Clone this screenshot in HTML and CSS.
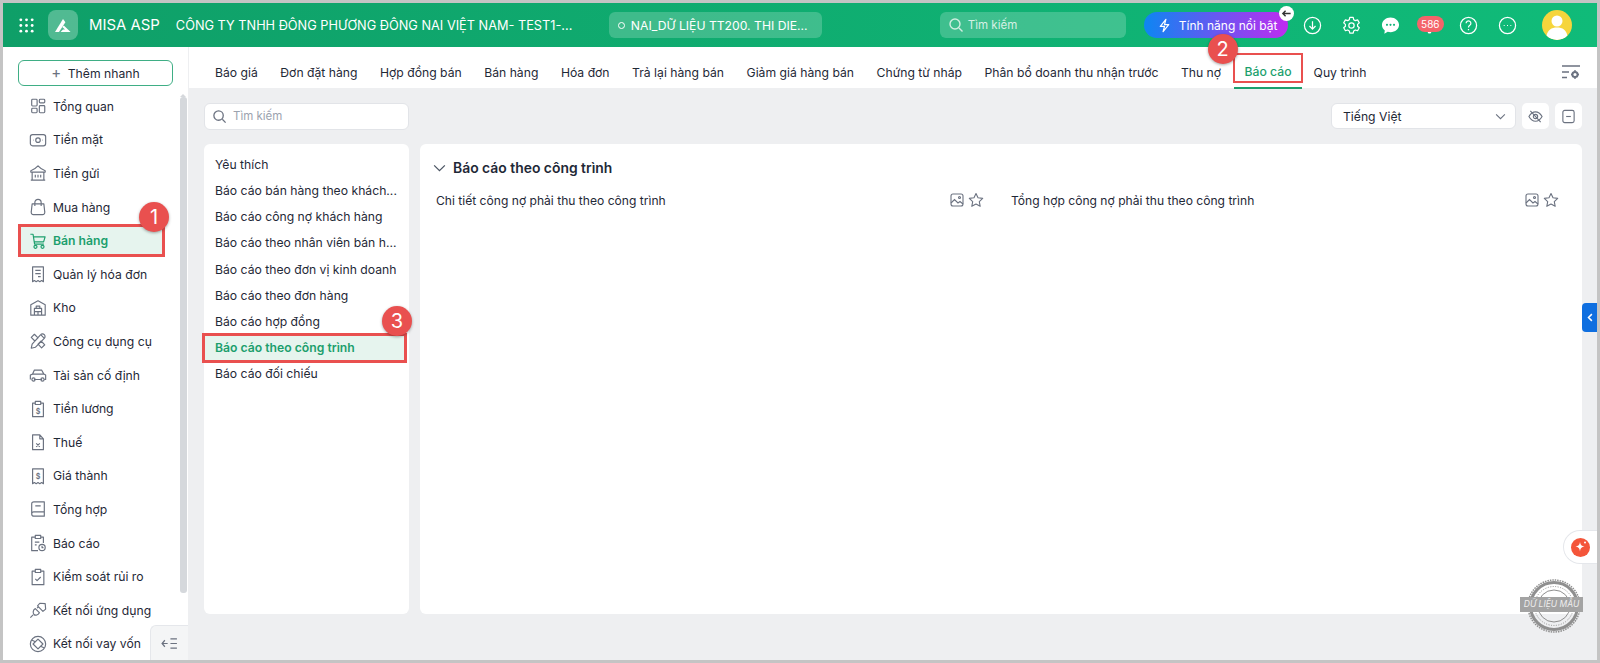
FILE: index.html
```html
<!DOCTYPE html>
<html lang="vi">
<head>
    <meta charset="UTF-8">
    <title>MISA ASP - Báo cáo</title>
    <link rel="stylesheet" href="styles.css">
</head>
<body>
    <header class="topbar">
        <svg class="apps" viewBox="0 0 18 18" fill="#fff"><circle cx="3" cy="3" r="1.5"/><circle cx="9" cy="3" r="1.5"/><circle cx="15" cy="3" r="1.5"/><circle cx="3" cy="9" r="1.5"/><circle cx="9" cy="9" r="1.5"/><circle cx="15" cy="9" r="1.5"/><circle cx="3" cy="15" r="1.5"/><circle cx="9" cy="15" r="1.5"/><circle cx="15" cy="15" r="1.5"/></svg>
        <div class="logo">
            <svg viewBox="0 0 20 18" width="16" height="15" fill="#fff"><path d="M10 1 L13 5 L5 17 H0 Z"/><path d="M11 9 L19.5 17 H7 L10 14 H12.5 L9 11 Z"/></svg>
        </div>
        <div class="brand">MISA ASP</div>
        <div class="company">CÔNG TY TNHH ĐÔNG PHƯƠNG ĐÔNG NAI VIỆT NAM- TEST1-...</div>
        <div class="env"><span class="env-dot"></span>NAI_DỮ LIỆU TT200. THI DIE...</div>
        <div class="top-search">
            <svg viewBox="0 0 16 16" width="16" height="16" fill="none" stroke="#cfeee0" stroke-width="1.4"><circle cx="7" cy="7" r="5"/><path d="M11 11l3.5 3.5"/></svg>
            Tìm kiếm
        </div>
        <div class="feature">
            <svg viewBox="0 0 16 16" width="15" height="15" fill="none" stroke="#fff" stroke-width="1.3" stroke-linejoin="round"><path d="M9.5 1.5 3.5 9H8l-1.5 5.5L12.5 7H8z"/></svg>
            Tính năng nổi bật
            <span class="feature-back">
                <svg viewBox="0 0 12 12" width="11" height="11" fill="none" stroke="#333" stroke-width="1.5"><path d="M10.5 6H2M5 3 2 6l3 3"/></svg>
            </span>
        </div>
        <div class="top-icons">
            <svg viewBox="0 0 20 20" fill="none" stroke="#fff" stroke-width="1.3"><circle cx="10" cy="10" r="8.5"/><path d="M10 5.5v8M6.8 10.5 10 13.8l3.2-3.3"/></svg>
            <svg viewBox="0 0 20 20" fill="none" stroke="#fff" stroke-width="1.3" stroke-linejoin="round"><path d="M8.2 1.5h3.6l.5 2.4 1.7 1 2.4-.8 1.8 3.1-1.8 1.6v2l1.8 1.6-1.8 3.1-2.4-.8-1.7 1-.5 2.4H8.2l-.5-2.4-1.7-1-2.4.8-1.8-3.1 1.8-1.6v-2L1.8 7.2l1.8-3.1 2.4.8 1.7-1z"/><circle cx="10" cy="10" r="2.8"/></svg>
            <svg viewBox="0 0 20 20" fill="#fff"><path d="M10 1.5c5 0 9 3.4 9 7.8s-4 7.8-9 7.8c-1 0-2-.1-2.9-.4L3.5 18.8l.5-3.6C2.1 13.8 1 11.7 1 9.3 1 4.9 5 1.5 10 1.5z"/><circle cx="6.3" cy="9.3" r="1.1" fill="#10b478"/><circle cx="10" cy="9.3" r="1.1" fill="#10b478"/><circle cx="13.7" cy="9.3" r="1.1" fill="#10b478"/></svg>
            <span class="bell">
                <svg viewBox="0 0 20 20" fill="#fff"><path d="M10 2a5.5 5.5 0 0 0-5.5 5.5V12L3 15h14l-1.5-3V7.5A5.5 5.5 0 0 0 10 2z"/><path d="M8 16.5a2 2 0 0 0 4 0z"/></svg>
                <span class="bell-count">586</span>
            </span>
            <svg viewBox="0 0 20 20" fill="none" stroke="#fff" stroke-width="1.3"><circle cx="10" cy="10" r="8.5"/><path d="M7.5 7.7a2.5 2.5 0 1 1 3.8 2.1c-.9.6-1.3 1-1.3 2.2M10 13.6v1.5"/></svg>
            <svg viewBox="0 0 20 20" fill="none" stroke="#fff" stroke-width="1.3"><circle cx="10" cy="10" r="8.5"/><path d="M6 10h1M9.5 10h1M13 10h1"/></svg>
        </div>
        <div class="avatar">
            <svg viewBox="0 0 30 30" width="30" height="30" fill="#fff"><circle cx="15" cy="11" r="5.5"/><path d="M4.5 26c1-6 5-8.5 10.500-8.500s9.500 2.500 10.500 8.500A15 15 0 0 1 15 30a15 15 0 0 1-10.500-4z"/></svg>
        </div>
    </header>

    <div class="main">
        <aside class="sidebar">
            <button class="quick-add"><span class="plus">+</span> Thêm nhanh</button>
            <nav>
                <a class="nav-item"><svg viewBox="0 0 20 20"><rect x="3" y="2.5" width="6" height="7.5" rx="1"/><rect x="11.5" y="2.5" width="6" height="4" rx="1"/><rect x="3" y="12.5" width="6" height="5" rx="1"/><rect x="11.5" y="9.5" width="6" height="8" rx="1"/></svg>Tổng quan</a>
                <a class="nav-item"><svg viewBox="0 0 20 20"><rect x="1.5" y="4" width="17" height="12.5" rx="2.5"/><circle cx="10" cy="10.2" r="2.5"/><path d="M4.5 10.2h.5M15 10.2h.5"/></svg>Tiền mặt</a>
                <a class="nav-item"><svg viewBox="0 0 20 20"><path d="M2 7.5c3-1 5.500-2.800 8-5.500 2.500 2.700 5 4.500 8 5.500v1.500H2zM3.500 9v9h13V9M2 18h16M7 12v3M10 12v3M13 12v3"/></svg>Tiền gửi</a>
                <a class="nav-item"><svg viewBox="0 0 20 20"><path d="M3.5 6.5h13l1 9a2.500 2.500 0 0 1-2.500 3H5a2.500 2.500 0 0 1-2.500-3zM6.500 9V5a3.500 3.500 0 0 1 7 0v4"/></svg>Mua hàng</a>
                <a class="nav-item active"><svg viewBox="0 0 20 20"><path d="M1.5 2.5H4.500l1.700 11h10.300M4.900 5.500h13l-1.700 5.500H5.700"/><circle cx="7.2" cy="16.5" r="1.7"/><circle cx="15" cy="16.5" r="1.7"/></svg>Bán hàng<span class="step step-1">1</span></a>
                <a class="nav-item"><svg viewBox="0 0 20 20"><path d="M4 2h12v16.500l-2-1.200-2 1.200-2-1.200-2 1.200-2-1.200-2 1.200zM7 6h6M7 9.500h6M10 13h3"/></svg>Quản lý hóa đơn</a>
                <a class="nav-item"><svg viewBox="0 0 20 20"><path d="M2 18V6.500L10 2l8 4.500V18zM6 18V10.500h8V18M8 10.500V8h4v2.500M6 14h8M10 14v4"/></svg>Kho</a>
                <a class="nav-item"><svg viewBox="0 0 20 20"><path d="M2.500 6 6 2.500l4 4L6.500 10zM13 3 17 7 7 17l-4.500 1L3.500 13.500zM10 13.500l3.500-3.500 4 4.200-3.500 3.500zM13 3c1-1.200 3-1 4 0s1.200 3 0 4"/></svg>Công cụ dụng cụ</a>
                <a class="nav-item"><svg viewBox="0 0 20 20"><path d="M1.500 15v-5l2.500-1 2-4.500h8L16.500 9l2 1v5h-1.500M5.500 15h9M4 9h12.500"/><circle cx="5" cy="15" r="1.8"/><circle cx="15" cy="15" r="1.8"/></svg>Tài sản cố định</a>
                <a class="nav-item"><svg viewBox="0 0 20 20"><path d="M7 3.500H4v15h12v-15h-3M7 1.500h6v3.500H7z"/><text x="10" y="15" text-anchor="middle" class="ico-text">$</text></svg>Tiền lương</a>
                <a class="nav-item"><svg viewBox="0 0 20 20"><path d="M4 2h8l4 4.500V18.500H4zM12 2v4.500h4M8 11.500l4 4M12 11.500l-4 4"/></svg>Thuế</a>
                <a class="nav-item"><svg viewBox="0 0 20 20"><path d="M4 2h12v16.500l-2-1.200-2 1.200-2-1.200-2 1.200-2-1.200-2 1.200z"/><text x="10" y="13" text-anchor="middle" class="ico-text">$</text></svg>Giá thành</a>
                <a class="nav-item"><svg viewBox="0 0 20 20"><path d="M5.500 2h11.500v16H5.500A2.500 2.500 0 0 1 3 15.500v-11A2.500 2.500 0 0 1 5.500 2zM3 15a2.300 2.300 0 0 1 2.300-1.800H17M7 6.500h6"/></svg>Tổng hợp</a>
                <a class="nav-item"><svg viewBox="0 0 20 20"><path d="M7 3.500H3V18.500H10M13 3.500h3V10M7 1.500h6v3.500H7zM6.500 9h5M6.500 12h2"/><circle cx="14.5" cy="15" r="3.5"/><path d="M14.500 13v2.200h1.600"/></svg>Báo cáo</a>
                <a class="nav-item"><svg viewBox="0 0 20 20"><path d="M7 3.500H3.500v15h13v-15H13M7 1.500h6v3.500H7zM7 12l2 2 4-4"/></svg>Kiểm soát rủi ro</a>
                <a class="nav-item"><svg viewBox="0 0 20 20"><path d="m1.500 18.500 3-3M7 8.500l4.500 4.500c-1 2.500-4.500 3.500-6 2S4.500 9.500 7 8.500zM12 2.500l6 .5.500 6-3 2.500-6-6zM9 8l1.500-1.500"/></svg>Kết nối ứng dụng</a>
                <a class="nav-item"><svg viewBox="0 0 20 20"><circle cx="10" cy="10" r="8.5"/><path d="M10 4.500l5.500 5.500-5.500 5.500L4.500 10zM3 5.500l4 2M17 14.500l-4-2"/></svg>Kết nối vay vốn</a>
            </nav>
            <span class="scroll-arrow"></span>
            <span class="scroll-thumb"></span>
            <div class="collapse">
                <svg viewBox="0 0 18 14" width="17" height="13" fill="none" stroke="#6b7280" stroke-width="1.3"><path d="M7 7H1M4 3.500 1 7l3 3.500M10 2h7M10 7h7M10 12h7"/></svg>
            </div>
        </aside>

        <div class="content">
            <div class="tabs">
                <a class="tab">Báo giá</a>
                <a class="tab">Đơn đặt hàng</a>
                <a class="tab">Hợp đồng bán</a>
                <a class="tab">Bán hàng</a>
                <a class="tab">Hóa đơn</a>
                <a class="tab">Trả lại hàng bán</a>
                <a class="tab">Giảm giá hàng bán</a>
                <a class="tab">Chứng từ nháp</a>
                <a class="tab">Phân bổ doanh thu nhận trước</a>
                <a class="tab">Thu nợ</a>
                <a class="tab active">Báo cáo<span class="step step-2">2</span></a>
                <a class="tab">Quy trình</a>
                <svg class="tab-settings" viewBox="0 0 19 15" width="19" height="15" fill="none" stroke="#6b7280" stroke-width="1.4"><path d="M0 1h18M0 7h7M0 12.500h5"/><circle cx="13" cy="9.500" r="2.600" stroke-width="2"/><path d="M13 5v1.500M13 12.500V14M9 9.500h1.500M15.500 9.500H17"/></svg>
            </div>

            <div class="toolbar">
                <div class="search">
                    <svg viewBox="0 0 16 16" width="15" height="15" fill="none" stroke="#6b7280" stroke-width="1.4"><circle cx="7" cy="7" r="5"/><path d="M11 11l3.500 3.500"/></svg>
                    Tìm kiếm
                </div>
                <div class="lang">Tiếng Việt
                    <svg viewBox="0 0 12 8" width="11" height="7" fill="none" stroke="#6b7280" stroke-width="1.2"><path d="M1 1.500 6 6.500l5-5"/></svg>
                </div>
                <button class="tool-btn"><svg viewBox="0 0 16 16" width="15" height="15" fill="none" stroke="#6b7280" stroke-width="1.2"><path d="M1 8c2-3.500 4.300-5 7-5s5 1.500 7 5c-2 3.500-4.300 5-7 5s-5-1.500-7-5z"/><circle cx="8" cy="8" r="2.3"/><path d="M2.500 2 13.500 14"/></svg></button>
                <button class="tool-btn"><svg viewBox="0 0 16 16" width="15" height="15" fill="none" stroke="#6b7280" stroke-width="1.2"><rect x="2" y="1.5" width="12" height="13" rx="2"/><path d="M5.500 8h5"/></svg></button>
            </div>

            <div class="panels">
                <ul class="report-groups">
                    <li>Yêu thích</li>
                    <li>Báo cáo bán hàng theo khách...</li>
                    <li>Báo cáo công nợ khách hàng</li>
                    <li>Báo cáo theo nhân viên bán h...</li>
                    <li>Báo cáo theo đơn vị kinh doanh</li>
                    <li>Báo cáo theo đơn hàng</li>
                    <li>Báo cáo hợp đồng</li>
                    <li class="active">Báo cáo theo công trình<span class="step step-3">3</span></li>
                    <li>Báo cáo đối chiếu</li>
                </ul>
                <section class="report-list">
                    <h2>
                        <svg viewBox="0 0 14 9" width="13" height="8" fill="none" stroke="#4b5563" stroke-width="1.4"><path d="M1 1.500 7 7.500l6-6"/></svg>
                        Báo cáo theo công trình
                    </h2>
                    <div class="report-rows">
                        <div class="report-row">
                            <span>Chi tiết công nợ phải thu theo công trình</span>
                            <svg viewBox="0 0 14 14" width="14" height="14" fill="none" stroke="#6b7280" stroke-width="1.1"><rect x="1" y="1" width="12" height="12" rx="2"/><path d="M1 10l3.500-3.500L8 10l2-1.500 3 2.500"/><circle cx="9.5" cy="4.5" r="1"/></svg>
                            <svg viewBox="0 0 16 16" width="16" height="16" fill="none" stroke="#6b7280" stroke-width="1.1" stroke-linejoin="round"><path d="m8 1.500 2 4.300 4.700.6-3.400 3.200.9 4.700L8 12l-4.200 2.300.9-4.700L1.300 6.400 6 5.800z"/></svg>
                        </div>
                        <div class="report-row">
                            <span>Tổng hợp công nợ phải thu theo công trình</span>
                            <svg viewBox="0 0 14 14" width="14" height="14" fill="none" stroke="#6b7280" stroke-width="1.1"><rect x="1" y="1" width="12" height="12" rx="2"/><path d="M1 10l3.500-3.500L8 10l2-1.500 3 2.500"/><circle cx="9.5" cy="4.5" r="1"/></svg>
                            <svg viewBox="0 0 16 16" width="16" height="16" fill="none" stroke="#6b7280" stroke-width="1.1" stroke-linejoin="round"><path d="m8 1.500 2 4.300 4.700.6-3.400 3.200.9 4.700L8 12l-4.200 2.300.9-4.700L1.300 6.400 6 5.800z"/></svg>
                        </div>
                    </div>
                </section>
            </div>

            <span class="side-toggle">
                <svg viewBox="0 0 8 12" width="6" height="9" fill="none" stroke="#fff" stroke-width="2"><path d="M6.500 1.500 2 6l4.500 4.500"/></svg>
            </span>
            <span class="assistant">
                <span class="assistant-dot">
                    <svg viewBox="0 0 14 14" width="14" height="14" fill="#fff"><path d="M6 2c.5 3 1.500 4 4.500 4.500C7.500 7 6.500 8 6 11.500 5.500 8 4.500 7 1.500 6.500 4.500 6 5.500 5 6 2z"/><circle cx="11" cy="2.5" r="1"/></svg>
                </span>
            </span>
            <div class="stamp">
                <svg viewBox="0 0 54 54" width="54" height="54" fill="none" stroke="#8f8f8f">
                    <circle cx="27" cy="27" r="26" stroke-width="1.5" stroke-dasharray="1.5 1"/>
                    <circle cx="27" cy="27" r="23.5" stroke-width="3"/>
                    <circle cx="27" cy="27" r="19.5" stroke-width="1" stroke-dasharray="1 1.5"/>
                    <circle cx="27" cy="27" r="16" stroke-width="1"/>
                </svg>
                <span class="stamp-label">DỮ LIỆU MẪU</span>
            </div>
        </div>
    </div>
</body>
</html>
```

FILE: styles.css
```css
* {
    box-sizing: border-box;
    margin: 0;
    padding: 0;
}

html, body {
    height: 100%;
}

body {
    display: flex;
    flex-direction: column;
    overflow: hidden;
    border: 3px solid #c4c4c4;
    background-color: #eeeff1;
    color: #1f2937;
    font-family: Inter, "Noto Sans", sans-serif;
    font-size: 12.2px;
}

/* top bar */
.topbar {
    display: flex;
    align-items: center;
    flex: none;
    height: 44px;
    background: linear-gradient(90deg, #0f9f68, #10bb79);
    color: #fff;
}

.apps {
    width: 17px;
    height: 17px;
    margin-left: 15px;
}

.logo {
    display: flex;
    align-items: center;
    justify-content: center;
    width: 30px;
    height: 30px;
    margin-left: 13px;
    border-radius: 8px;
    background-color: rgba(255, 255, 255, 0.28);
}

.brand {
    margin-left: 11px;
    font-size: 14.9px;
    white-space: nowrap;
}

.company {
    width: 400px;
    margin-left: 16px;
    font-size: 12.75px;
    white-space: nowrap;
}

.env {
    display: flex;
    align-items: center;
    width: 213px;
    height: 26px;
    margin-left: 33px;
    padding-left: 9px;
    border-radius: 6px;
    background-color: rgba(255, 255, 255, 0.2);
    font-size: 12.2px;
    white-space: nowrap;
}

.env-dot {
    width: 7px;
    height: 7px;
    margin-right: 6px;
    border: 1.3px solid #fff;
    border-radius: 50%;
}

.top-search {
    display: flex;
    align-items: center;
    gap: 4px;
    width: 186px;
    height: 26px;
    margin-left: 118px;
    padding-left: 8px;
    border-radius: 6px;
    background-color: rgba(255, 255, 255, 0.2);
    color: #d5f0e4;
    font-size: 11.5px;
}

.feature {
    position: relative;
    display: flex;
    align-items: center;
    gap: 7px;
    width: 144px;
    height: 26px;
    margin-left: 18px;
    padding-left: 13px;
    border-radius: 13px;
    background: linear-gradient(90deg, #0d86f2, #c02af0);
    font-size: 12px;
    white-space: nowrap;
}

.feature-back {
    position: absolute;
    top: -6px;
    right: -6px;
    display: flex;
    align-items: center;
    justify-content: center;
    width: 15px;
    height: 15px;
    border-radius: 50%;
    background-color: #fff;
}

.top-icons {
    display: flex;
    align-items: center;
    gap: 20px;
    margin-left: 15px;
}

.top-icons svg {
    display: block;
    width: 19px;
    height: 19px;
}

.bell {
    position: relative;
}

.bell-count {
    position: absolute;
    top: 0;
    left: -3px;
    width: 27px;
    height: 16px;
    border-radius: 8px;
    background-color: #f4646a;
    font-size: 10px;
    line-height: 16px;
    text-align: center;
}

.avatar {
    width: 30px;
    height: 30px;
    margin-left: 25px;
    overflow: hidden;
    border-radius: 50%;
    background-color: #f6d53c;
}

/* layout */
.main {
    display: flex;
    flex: 1;
    min-height: 0;
}

.sidebar {
    position: relative;
    flex: none;
    width: 185px;
    overflow: hidden;
    background-color: #fff;
}

.quick-add {
    display: block;
    width: 155px;
    height: 26px;
    margin: 13px 0 3.5px 15px;
    border: 1px solid #3fae85;
    border-radius: 6px;
    background-color: #fff;
    color: #1f2937;
    font-family: inherit;
    font-size: 12.2px;
}

.plus {
    margin-right: 3px;
    color: #6b7280;
    font-size: 15px;
    line-height: 1;
}

.nav-item {
    position: relative;
    display: flex;
    align-items: center;
    gap: 6px;
    width: 147px;
    height: 33.6px;
    margin-left: 15px;
    padding-left: 11px;
    white-space: nowrap;
}

.nav-item svg {
    flex: none;
    width: 18px;
    height: 18px;
    fill: none;
    stroke: #6b7280;
    stroke-width: 1.3;
    stroke-linejoin: round;
}

.ico-text {
    fill: #6b7280;
    stroke: none;
    font-size: 8px;
    font-weight: 600;
}

.nav-item.active {
    outline: 3px solid #e9504f;
    outline-offset: -3px;
    background-color: #e6f4ee;
    color: #1c9f6d;
    font-weight: 600;
}

.nav-item.active svg {
    stroke: #1c9f6d;
}

.scroll-arrow {
    position: absolute;
    top: 44px;
    right: 2px;
    border: 3px solid transparent;
    border-bottom-color: #d5d8dc;
}

.scroll-thumb {
    position: absolute;
    top: 50px;
    right: 1px;
    width: 7px;
    height: 496px;
    border-radius: 3px;
    background-color: #d5d8dc;
}

.collapse {
    position: absolute;
    right: 0;
    bottom: 0;
    display: flex;
    align-items: center;
    justify-content: center;
    width: 38px;
    height: 35px;
    border-top: 1px solid #e5e7eb;
    border-left: 1px solid #e5e7eb;
    border-top-left-radius: 6px;
    background-color: #f4f5f6;
}

/* red step markers */
.step {
    position: absolute;
    z-index: 5;
    width: 30px;
    height: 30px;
    border-radius: 50%;
    background-color: #e9504f;
    box-shadow: 0 1px 3px rgba(0, 0, 0, 0.35);
    color: #fff;
    font-size: 20px;
    font-weight: 400;
    line-height: 30px;
    text-align: center;
}

.step-1 {
    top: -22px;
    right: -4px;
}

.step-2 {
    top: -21.5px;
    left: -27px;
}

.step-3 {
    top: -29px;
    right: -7px;
}

/* tabs */
.content {
    position: relative;
    display: flex;
    flex: 1;
    flex-direction: column;
    min-width: 0;
}

.tabs {
    display: flex;
    flex: none;
    align-items: center;
    height: 41px;
    padding: 9px 0 0 26px;
    background-color: #fff;
    border-left: 1px solid #eeeff1;
}

.tab {
    position: relative;
    margin-right: 22.5px;
    white-space: nowrap;
}

.tab.active {
    display: flex;
    align-self: flex-start;
    align-items: center;
    width: 70px;
    height: 30px;
    margin: -3px 11px 0 -11px;
    padding: 6px 0 0 10px;
    border: 2.5px solid #e9504f;
    color: #1c9f6d;
    font-weight: 500;
}

.tab.active::after {
    content: "";
    position: absolute;
    right: -1px;
    bottom: -7.5px;
    left: -1px;
    height: 2px;
    background-color: #1c9f6d;
}

.tab-settings {
    margin-left: auto;
    margin-right: 16px;
}

/* toolbar */
.toolbar {
    display: flex;
    flex: none;
    align-items: center;
    gap: 6px;
    height: 56px;
    padding: 0 15px 0 16px;
}

.search {
    display: flex;
    align-items: center;
    gap: 6px;
    width: 205px;
    height: 27px;
    margin-right: auto;
    padding-left: 7px;
    border: 1px solid #e2e4e8;
    border-radius: 6px;
    background-color: #fff;
    color: #9ca3af;
    font-size: 11.5px;
}

.lang {
    display: flex;
    align-items: center;
    justify-content: space-between;
    width: 185px;
    height: 26px;
    padding: 0 9px 0 11px;
    border: 1px solid #e2e4e8;
    border-radius: 6px;
    background-color: #fff;
}

.tool-btn {
    display: flex;
    align-items: center;
    justify-content: center;
    width: 27px;
    height: 26px;
    border: none;
    border-radius: 5px;
    background-color: #fff;
}

/* report panels */
.panels {
    display: flex;
    gap: 11px;
    height: 470px;
    padding: 0 15px 0 16px;
}

.report-groups {
    flex: none;
    width: 205px;
    padding: 8px 0;
    border-radius: 6px;
    background-color: #fff;
    list-style: none;
}

.report-groups li {
    position: relative;
    height: 26.15px;
    padding-left: 11px;
    line-height: 26px;
    white-space: nowrap;
}

.report-groups li.active {
    margin-right: 4px;
    outline: 3px solid #e9504f;
    outline-offset: -1px;
    background-color: #e6f4ee;
    color: #1c9f6d;
    font-weight: 600;
}

.report-list {
    flex: 1;
    padding: 0 0 0 13px;
    border-radius: 6px;
    background-color: #fff;
}

.report-list h2 {
    display: flex;
    align-items: center;
    gap: 7px;
    height: 47px;
    font-size: 13.9px;
    font-weight: 600;
}

.report-rows {
    display: grid;
    grid-template-columns: 548px 548px;
    gap: 27px;
    padding-left: 3px;
}

.report-row {
    display: flex;
    align-items: center;
    gap: 4px;
    height: 18px;
    font-size: 12.1px;
}

.report-row span {
    flex: 1;
}

/* floating bits */
.side-toggle {
    position: absolute;
    top: 256px;
    right: 0;
    display: flex;
    align-items: center;
    justify-content: center;
    width: 15px;
    height: 29px;
    border-radius: 4px 0 0 4px;
    background-color: #0f6fe0;
}

.assistant {
    position: absolute;
    top: 483px;
    right: 0;
    display: flex;
    align-items: center;
    width: 34px;
    height: 34px;
    padding-left: 7px;
    border: 1px solid #e5e7eb;
    border-right: none;
    border-radius: 17px 0 0 17px;
    background-color: #fff;
}

.assistant-dot {
    display: flex;
    align-items: center;
    justify-content: center;
    width: 19px;
    height: 19px;
    border-radius: 50%;
    background-color: #f4553a;
}

.stamp {
    position: absolute;
    top: 532px;
    right: 16px;
    width: 54px;
    height: 54px;
}

.stamp-label {
    position: absolute;
    top: 18px;
    left: -7px;
    width: 63px;
    height: 15px;
    background-color: #a3a3a3;
    color: #eee;
    font-size: 8.5px;
    font-style: italic;
    line-height: 15px;
    text-align: center;
    white-space: nowrap;
}
```
